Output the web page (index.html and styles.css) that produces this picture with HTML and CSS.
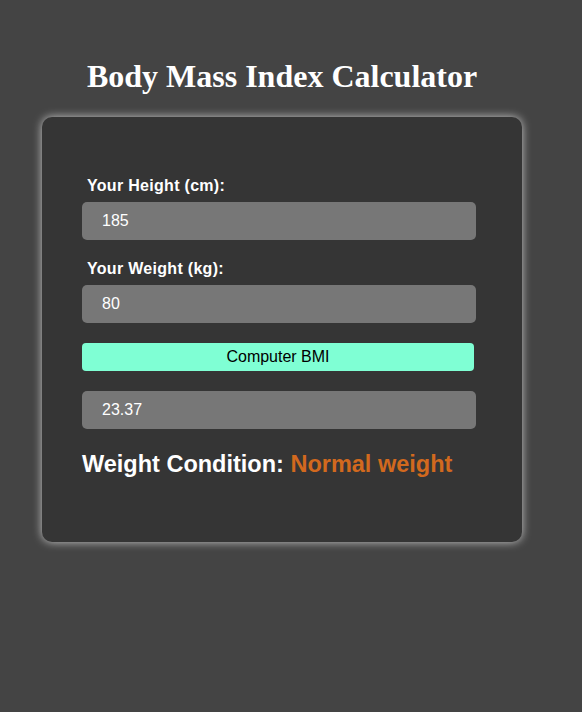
FILE: index.html
```html
<!DOCTYPE html>
<html>
<head>
<meta charset="utf-8">
<link rel="stylesheet" href="styles.css">
</head>
<body>
<div class="app">
  <h1 class="title">Body Mass Index Calculator</h1>
  <div class="card">
    <label class="label">Your Height (cm):</label>
    <div class="field">185</div>
    <label class="label">Your Weight (kg):</label>
    <div class="field">80</div>
    <button class="btn">Computer BMI</button>
    <div class="field result">23.37</div>
    <div class="condition">Weight Condition: <span class="status">Normal weight</span></div>
  </div>
</div>
</body>
</html>
```
FILE: styles.css
```css
html, body {
  margin: 0;
  padding: 0;
  background: #444444;
  height: 100%;
}
.app {
  width: 564px;
  padding-top: 58px;
}
.title {
  margin: 0 0 22px;
  font-family: "Liberation Serif", "Times New Roman", serif;
  font-size: 32px;
  font-weight: bold;
  color: #ffffff;
  text-align: center;
  line-height: normal;
}
.card {
  width: 480px;
  box-sizing: border-box;
  margin: 0 auto;
  background: #353535;
  border-radius: 10px;
  box-shadow: 0 0 10px rgba(255, 255, 255, 0.7);
  padding: 60px 0 64px 40px;
  display: flex;
  flex-direction: column;
  align-items: flex-start;
  font-family: "Liberation Sans", Arial, sans-serif;
}
.label {
  font-size: 16px;
  font-weight: bold;
  letter-spacing: 0.3px;
  color: #ffffff;
  padding-left: 5px;
  margin-bottom: 7px;
  line-height: 18px;
}
.field {
  width: 394px;
  height: 38px;
  box-sizing: border-box;
  background: #777777;
  border-radius: 5px;
  padding-left: 20px;
  color: #ffffff;
  font-size: 16px;
  display: flex;
  align-items: center;
  margin-bottom: 20px;
}
.btn {
  width: 392px;
  height: 28px;
  background: #7fffd4;
  border: none;
  border-radius: 4px;
  font-family: "Liberation Sans", Arial, sans-serif;
  font-size: 16px;
  color: #000000;
  padding: 0;
  margin: 0 0 20px;
}
.result {
  margin-bottom: 21px;
}
.condition {
  font-size: 23.5px;
  font-weight: bold;
  color: #ffffff;
  line-height: 28px;
}
.status {
  color: #d2691e;
}
```
